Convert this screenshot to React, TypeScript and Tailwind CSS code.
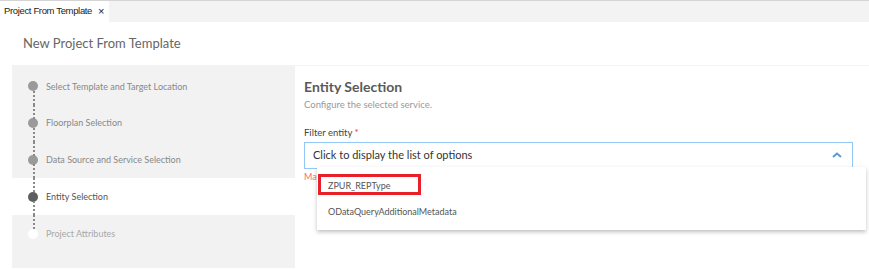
import React from "react";

const font = { fontFamily: 'Lato, "Open Sans", sans-serif' };

function Step({ label, state, first, last }: { label: string; state: "done" | "current" | "todo"; first?: boolean; last?: boolean }) {
  const dot =
    state === "current" ? "bg-[#5e5e5e]" : state === "done" ? "bg-[#9a9a9a]" : "bg-white";
  const text = state === "current" ? "text-[#555]" : state === "done" ? "text-[#888]" : "text-[#a8a8a8]";
  return (
    <div className={`relative flex h-[37px] items-center pl-[16px] ${state === "current" ? "bg-white" : ""}`}>
      {!first && (
        <div className="absolute left-[21px] top-0 h-[14px] border-l-2 border-dotted border-[#8a8a8a]" />
      )}
      {!last && (
        <div className="absolute left-[21px] bottom-0 h-[14px] border-l-2 border-dotted border-[#8a8a8a]" />
      )}
      <div className={`h-[10px] w-[10px] rounded-full ${dot}`} />
      <span className={`ml-[8px] text-[9px] ${text}`}>{label}</span>
    </div>
  );
}

export default function App() {
  return (
    <div className="h-[269px] w-[869px] overflow-hidden bg-white" style={font}>
      <div className="flex h-[22px] border-t border-[#d4d4d4] bg-[#f3f3f3]">
        <div
          className="flex h-full w-[109px] items-center whitespace-nowrap bg-white pl-[4px] text-[9.5px] text-[#222]"
          style={{ fontFamily: '"Liberation Sans", Arial, sans-serif', letterSpacing: "-0.35px" }}
        >
          Project From Template
          <span className="ml-[6px] text-[11px]">×</span>
        </div>
      </div>
      <div className="flex h-[43px] items-center pl-[23px] text-[13px] text-[#666]">New Project From Template</div>
      <div className="flex h-[204px]">
        <div className="ml-[12px] flex w-[283px] flex-col bg-[#f2f2f2]">
          <div className="h-[3px]" />
          <Step label="Select Template and Target Location" state="done" first />
          <Step label="Floorplan Selection" state="done" />
          <Step label="Data Source and Service Selection" state="done" />
          <Step label="Entity Selection" state="current" />
          <Step label="Project Attributes" state="todo" last />
          <div className="h-[16px]" />
          <div className="h-px bg-white" />
          <div className="flex-1" />
        </div>
        <div className="relative flex-1 border-t border-[#f4f4f4] pl-[9px]">
          <div className="pt-[10px] text-[14px] font-bold text-[#5a5a5a]">Entity Selection</div>
          <div className="mt-[1px] text-[9.5px] text-[#999]">Configure the selected service.</div>
          <div className="mt-[14px] text-[9.5px] text-[#444]">
            Filter entity <span className="text-[#e04040]">*</span>
          </div>
          <div className="mt-[1px] flex h-[27px] w-[549px] items-center justify-between border border-[#91c8f6] pl-[8px] pr-[10px] text-[11px] text-[#333]">
            <span>Click to display the list of options</span>
            <svg width="10" height="6" viewBox="0 0 10 6">
              <path d="M1 5 L5 1.5 L9 5" stroke="#5b9bd5" strokeWidth="2" fill="none" />
            </svg>
          </div>
          <div className="mt-[1px] text-[9px] text-[#f07070]">Mandatory field</div>
          <div className="absolute left-[22px] top-[101px] w-[549px] bg-white pb-[5px] pt-[6px] shadow-[0_2px_4px_rgba(0,0,0,0.25)]">
            <span className="absolute left-[1px] top-[7px] h-[21px] w-[103px] border-[3px] border-[#e8202a]" />
            <div className="flex h-[26px] items-center pl-[11px] text-[9px] text-[#555]">ZPUR_REPType</div>
            <div className="flex h-[26px] items-center pl-[11px] text-[9px] text-[#555]">ODataQueryAdditionalMetadata</div>
          </div>
        </div>
      </div>
    </div>
  );
}
